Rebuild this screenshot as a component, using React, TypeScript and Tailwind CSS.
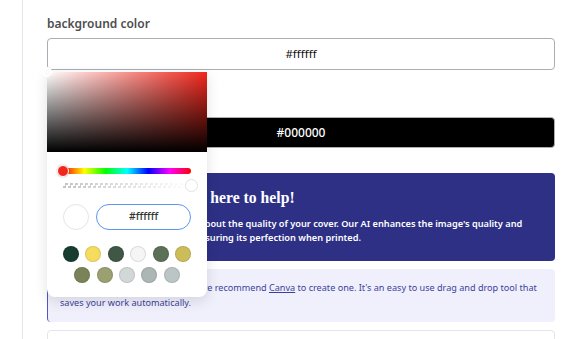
import React from "react"

const swatches = [
	"#173d30",
	"#f5dc5e",
	"#3f5744",
	"#f4f5f4",
	"#5c7058",
	"#cbbd5a",
	"#7a8358",
	"#9aa070",
	"#d2d8d8",
	"#acb6b5",
	"#bcc5c6",
]

const ColorPopover = () => {
	return (
		<div className="absolute left-[47px] top-[72px] w-[160px] rounded-b-lg bg-white shadow-[0_4px_14px_rgba(0,0,0,0.12)]">
			<div className="relative h-[80px] w-full bg-[linear-gradient(to_right,#ffffff,#f0261b)]">
				<div className="absolute inset-0 bg-[linear-gradient(to_top,#000000,rgba(0,0,0,0))]" />
				<div className="absolute -left-[5px] -top-[5px] h-[10px] w-[10px] rounded-full border-2 border-white" />
			</div>
			<div className="px-4 pb-[14px] pt-[16px]">
				<div className="relative h-[6px] rounded-full bg-[linear-gradient(to_right,#ff0000,#ffff00,#00ff00,#00ffff,#0000ff,#ff00ff,#ff0000)]">
					<div className="absolute -left-[6px] -top-[3px] h-[12px] w-[12px] rounded-full border border-white bg-[#f2261b] shadow-[0_0_2px_rgba(0,0,0,0.3)]" />
				</div>
				<div className="relative mt-[9px] h-[5px] bg-[repeating-conic-gradient(#c4c4c4_0%_25%,#ffffff_0%_50%)] bg-[length:5px_5px]">
					<div className="absolute inset-0 bg-[linear-gradient(to_right,rgba(255,255,255,0),#ffffff)]" />
					<div className="absolute -right-[7px] -top-[4px] h-[13px] w-[13px] rounded-full border border-[#e2e2e2] bg-white" />
				</div>
				<div className="mt-[16px] flex items-center gap-[7px]">
					<div className="h-[26px] w-[26px] shrink-0 rounded-full border border-[#e4e4e4] bg-white" />
					<div className="flex h-[26px] flex-1 items-center justify-center rounded-full border border-[#5b96ee] text-[10.5px] font-medium text-[#333]">
						#ffffff
					</div>
				</div>
				<div className="mt-[16px] flex flex-wrap justify-center gap-x-[6.4px] gap-y-[5px]">
					{swatches.map((c, i) => (
						<div
							key={i}
							className="h-[16px] w-[16px] rounded-full border border-black/10"
							style={{ backgroundColor: c }}
						/>
					))}
				</div>
			</div>
		</div>
	)
}

export default function App() {
	return (
		<div className="relative flex h-[339px] w-[577px] overflow-hidden bg-white [font-family:'Noto_Sans',sans-serif]">
			<div className="w-[23px] shrink-0 border-r border-[#e6e6e6]" />
			<div className="flex flex-1 flex-col pl-[24px] pr-[22px] pt-[15px] *:shrink-0">
				<label className="h-[18px] text-[12px] font-semibold leading-[18px] text-[#4d4d4d]">
					background color
				</label>
				<div className="mt-[5px] flex h-[32px] items-center justify-center rounded border border-[#a9aeb5] text-[11.5px] text-[#111]">
					#ffffff
				</div>
				<label className="mt-[20px] h-[18px] text-[12px] font-semibold leading-[18px] text-[#4d4d4d]">
					text color
				</label>
				<div className="mt-[9px] flex h-[31px] items-center justify-center rounded border border-[#a9aeb5] bg-black text-[12px] font-medium text-white">
					#000000
				</div>
				<div className="mt-[25px] h-[88px] rounded bg-[#2e3086] px-3 pt-[15px] text-white">
					<h3 className="text-[15.7px] font-bold leading-[20px] [font-family:'Liberation_Serif',serif]">
						Don't worry, our AI is here to help!
					</h3>
					<p className="mt-[9px] text-[9.2px] font-semibold leading-[14px]">
						Don't worry if you have doubts about the quality of your cover. Our AI enhances the image's quality and resolution, and vibrancy, thus ensuring its perfection when printed.
					</p>
				</div>
				<div className="mt-[8px] h-[53px] rounded border-l border-[#5255c4] bg-[#eff0fb] px-3 pt-[12px] text-[9.1px] leading-[14.5px] text-[#3c3f9e]">
					If you don't have a cover file yet, we recommend{" "}
					<span className="underline">Canva</span> to create one. It's an easy
					to use drag and drop tool that saves your work automatically.
				</div>
				<div className="mt-[8px] h-[40px] rounded border border-[#e3e5e8]" />
			</div>
			<ColorPopover />
		</div>
	)
}
